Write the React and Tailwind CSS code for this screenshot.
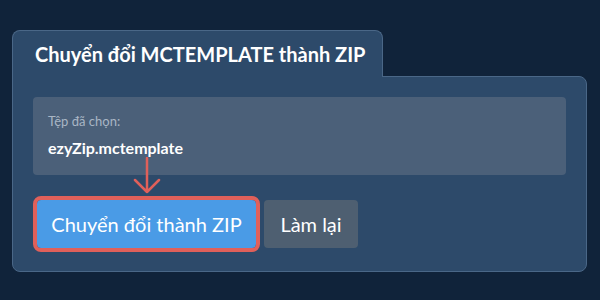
import React from "react";

const App = () => {
    return (
        <div className="w-[600px] h-[300px] bg-[#10233a] pt-[30px] px-[12px] font-['Lato','Noto_Sans',sans-serif] relative overflow-hidden">
            {/* TAB */}
            <div className="relative z-10 w-[371px] h-[47px] -mb-px bg-[#2d4a6a] border border-b-0 border-[#4a6787] rounded-t-lg pl-[22px] pt-[11px]">
                <h1 className="text-[20px] font-bold text-white leading-6">Chuyển đổi MCTEMPLATE thành ZIP</h1>
            </div>

            {/* BODY */}
            <div className="w-[575px] bg-[#2d4a6a] border border-[#4a6787] rounded-tr-lg rounded-b-lg px-5 pt-5 pb-[23px]">
                <div className="bg-[#4b6079] rounded h-[78px] px-[15px] pt-[16px]">
                    <p className="text-[13px] text-[#a9b6c5] leading-4">Tệp đã chọn:</p>
                    <p className="text-[16px] font-bold text-white mt-[9px] leading-5">ezyZip.mctemplate</p>
                </div>

                <div className="flex items-center gap-2 mt-[25px] pl-[4px]">
                    <button className="h-12 w-[219px] flex items-center justify-center bg-[#4a9be6] text-white text-[20px] rounded-sm outline-4 outline-solid outline-[#e0605a]">
                        Chuyển đổi thành ZIP
                    </button>
                    <button className="h-12 w-[94px] flex items-center justify-center bg-[#4e5f71] text-white text-[20px] rounded">
                        Làm lại
                    </button>
                </div>
            </div>

            {/* ANNOTATION ARROW */}
            <svg className="absolute left-[133px] top-[157px]" width="28" height="38" viewBox="0 0 28 38">
                <path d="M14 1 L14 35 M2 23 L14 35 L26 23" stroke="#e0605a" strokeWidth="2.5" fill="none" strokeLinecap="round" strokeLinejoin="round" />
            </svg>
        </div>
    );
};

export default App;
